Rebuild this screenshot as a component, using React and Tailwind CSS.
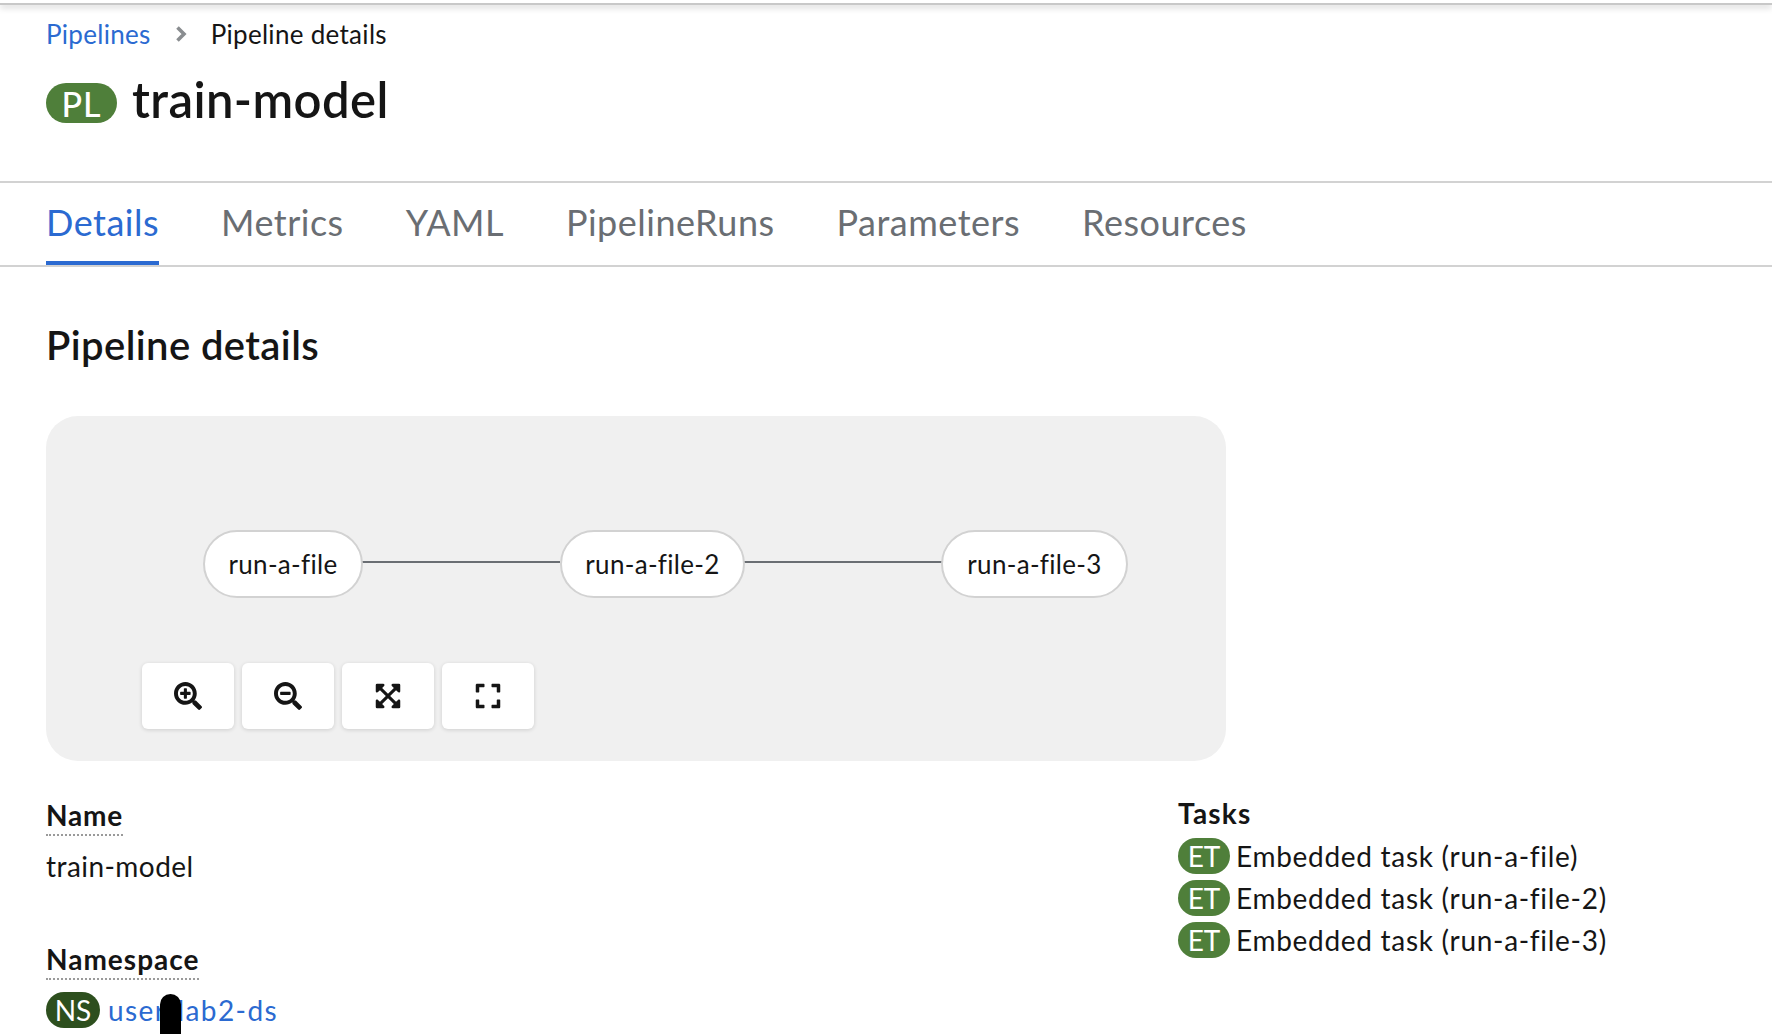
import { FaSearchPlus, FaSearchMinus, FaExpandArrowsAlt, FaExpand } from 'react-icons/fa';

const tabs = ['Details', 'Metrics', 'YAML', 'PipelineRuns', 'Parameters', 'Resources'];
const tasks = ['run-a-file', 'run-a-file-2', 'run-a-file-3'];
const controls = [FaSearchPlus, FaSearchMinus, FaExpandArrowsAlt, FaExpand];

function Badge({ label, className }) {
  return (
    <span className={`inline-flex items-center justify-center rounded-full text-white tracking-normal ${className}`}>
      {label}
    </span>
  );
}

function Node({ label, className }) {
  return (
    <div className={`absolute top-[114px] h-[68px] flex items-center justify-center rounded-full bg-white border-2 border-[#d2d2d2] text-[26px] tracking-[0.3px] text-[#151515] ${className}`}>
      {label}
    </div>
  );
}

export default function App() {
  return (
    <div className="w-[1772px] h-[1034px] overflow-hidden bg-white relative font-['Lato',sans-serif] [font-variant-ligatures:none] text-[#151515]">
      <div className="h-[5px] border-b-2 border-[#c8c8c8] shadow-[0_3px_6px_rgba(0,0,0,0.15)]" />

      <div className="px-[46px]">
        <nav className="mt-[13px] h-[32px] flex items-center text-[26px] tracking-[0.3px]">
          <a className="text-[#2b6ad1]">Pipelines</a>
          <svg className="mx-[23px] w-[14px] h-[16px]" viewBox="0 0 14 16">
            <path d="M3.5 1.5 L10 8 L3.5 14.5" fill="none" stroke="#8a8d90" strokeWidth="3.6" />
          </svg>
          <span>Pipeline details</span>
        </nav>
        <div className="mt-[19px] h-[60px] flex items-center">
          <Badge label="PL" className="w-[71px] h-[40px] mt-[8px] bg-[#4f7f3a] text-[34px] font-medium !tracking-[1px]" />
          <h1 className="ml-[15px] text-[49px] tracking-[0.4px] font-semibold leading-none">train-model</h1>
        </div>
      </div>

      <div className="mt-[52px] h-[86px] border-y-2 border-[#d2d2d2] px-[46px] flex gap-[62px]">
        {tabs.map((tab, i) => (
          <div
            key={tab}
            className={`h-full flex items-center text-[36px] tracking-[0.5px] border-b-4 ${i === 0 ? 'text-[#2b6ad1] border-[#2b6ad1]' : 'text-[#6a6e73] border-transparent'}`}
          >
            {tab}
          </div>
        ))}
      </div>

      <div className="px-[46px]">
        <h2 className="mt-[53px] h-[50px] flex items-center text-[40px] tracking-[0.4px] font-semibold">Pipeline details</h2>

        <div className="mt-[46px] w-[1180px] h-[345px] rounded-[32px] bg-[#f0f0f0] relative">
          <div className="absolute left-[316px] top-[145px] w-[198px] h-[2px] bg-[#6a6e73]" />
          <div className="absolute left-[698px] top-[145px] w-[198px] h-[2px] bg-[#6a6e73]" />
          <Node label="run-a-file" className="left-[157px] w-[160px]" />
          <Node label="run-a-file-2" className="left-[514px] w-[185px]" />
          <Node label="run-a-file-3" className="left-[895px] w-[187px]" />

          <div className="absolute left-[96px] top-[247px] flex gap-[8px]">
            {controls.map((Icon, i) => (
              <button key={i} className="w-[92px] h-[66px] pb-[1px] flex items-center justify-center rounded-[6px] bg-white shadow-[0_1px_4px_rgba(0,0,0,0.14)] text-[#151515]">
                <Icon size={28} />
              </button>
            ))}
          </div>
        </div>

        <div className="mt-[36px] flex text-[28px] tracking-[0.45px]">
          <div className="w-[1132px] shrink-0">
            <div className="font-bold tracking-[0.8px] leading-[36px] w-max border-b-2 border-dotted border-[#9a9a9a] pb-[1px]">Name</div>
            <div className="mt-[12px] leading-[36px]">train-model</div>
            <div className="mt-[57px] font-bold tracking-[1px] leading-[36px] w-max border-b-2 border-dotted border-[#9a9a9a] pb-[1px]">Namespace</div>
            <div className="mt-[12px] flex items-center gap-[8px] leading-[36px] relative">
              <Badge label="NS" className="w-[54px] h-[36px] bg-[#2d4f1e] text-[28px]" />
              <a className="text-[#2b6ad1] tracking-[1.4px]">user-lab2-ds</a>
              <div className="absolute left-[114px] top-[2px] w-[21px] h-[50px] rounded-t-full bg-black" />
            </div>
          </div>
          <div className="-mt-[2px]">
            <div className="font-bold tracking-[1.2px] leading-[36px]">Tasks</div>
            <div className="mt-[7px] flex flex-col gap-[6px] tracking-[0.7px]">
              {tasks.map((t) => (
                <div key={t} className="h-[36px] flex items-center gap-[6px]">
                  <Badge label="ET" className="w-[52px] h-[36px] bg-[#4f7f3a] text-[28px]" />
                  <span>Embedded task ({t})</span>
                </div>
              ))}
            </div>
          </div>
        </div>
      </div>
    </div>
  );
}
